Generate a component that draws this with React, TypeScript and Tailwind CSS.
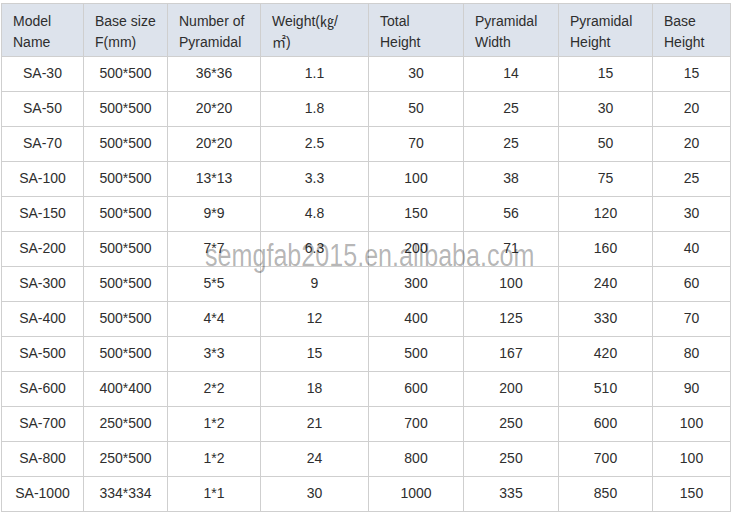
import React from 'react';

const HEAD: React.ReactNode[] = [
  <>Model<br />Name</>,
  <>Base size<br />F(mm)</>,
  <>Number of<br />Pyramidal</>,
  <>Weight(㎏/<br />㎡)</>,
  <>Total<br />Height</>,
  <>Pyramidal<br />Width</>,
  <>Pyramidal<br />Height</>,
  <>Base<br />Height</>,
];

const WIDTHS = [82, 84, 93, 108, 95, 95, 94, 78];

const ROWS: string[][] = [
  ['SA-30', '500*500', '36*36', '1.1', '30', '14', '15', '15'],
  ['SA-50', '500*500', '20*20', '1.8', '50', '25', '30', '20'],
  ['SA-70', '500*500', '20*20', '2.5', '70', '25', '50', '20'],
  ['SA-100', '500*500', '13*13', '3.3', '100', '38', '75', '25'],
  ['SA-150', '500*500', '9*9', '4.8', '150', '56', '120', '30'],
  ['SA-200', '500*500', '7*7', '6.3', '200', '71', '160', '40'],
  ['SA-300', '500*500', '5*5', '9', '300', '100', '240', '60'],
  ['SA-400', '500*500', '4*4', '12', '400', '125', '330', '70'],
  ['SA-500', '500*500', '3*3', '15', '500', '167', '420', '80'],
  ['SA-600', '400*400', '2*2', '18', '600', '200', '510', '90'],
  ['SA-700', '250*500', '1*2', '21', '700', '250', '600', '100'],
  ['SA-800', '250*500', '1*2', '24', '800', '250', '700', '100'],
  ['SA-1000', '334*334', '1*1', '30', '1000', '335', '850', '150'],
];

const App: React.FC = () => {
  return (
    <div className="relative w-[734px] h-[517px] bg-white overflow-hidden font-['Liberation_Sans','Noto_Sans_CJK_SC',sans-serif] text-[14px] text-[#2e2e2e]">
      <table className="ml-px mt-[3px] border-collapse table-fixed w-[729px]">
        <colgroup>
          {WIDTHS.map((w, i) => (
            <col key={i} style={{ width: w }} />
          ))}
        </colgroup>
        <thead>
          <tr className="h-[53px] bg-[#dde3ec]">
            {HEAD.map((h, i) => (
              <th key={i} className="border border-[#cfcfcf] px-[11px] pt-[3px] text-left font-normal leading-[21px] align-middle">
                {h}
              </th>
            ))}
          </tr>
        </thead>
        <tbody>
          {ROWS.map((r) => (
            <tr key={r[0]} className="h-[35px]">
              {r.map((c, i) => (
                <td key={i} className="border border-[#cfcfcf] text-center align-middle p-0 pb-[2px]">
                  {c}
                </td>
              ))}
            </tr>
          ))}
        </tbody>
      </table>

      {/* watermark */}
      <div className="absolute left-[205px] top-[239px] origin-left scale-x-[0.81] text-[31px] leading-[34px] text-black/30 whitespace-nowrap pointer-events-none font-['Liberation_Sans',sans-serif]">
        semgfab2015.en.alibaba.com
      </div>
    </div>
  );
};

export default App;
